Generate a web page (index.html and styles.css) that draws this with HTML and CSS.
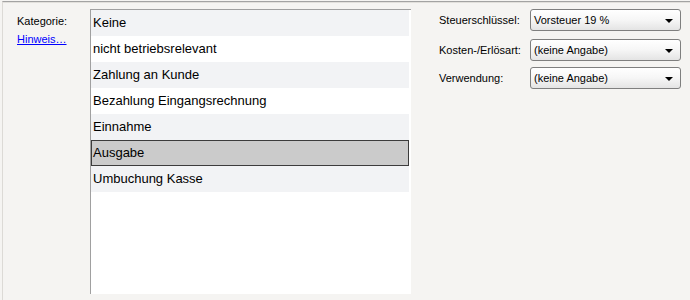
FILE: index.html
```html
<!DOCTYPE html>
<html>
<head>
<meta charset="utf-8">
<link rel="stylesheet" href="styles.css">
</head>
<body>
<div class="panel">
  <div class="side">
    <div class="label">Kategorie:</div>
    <a class="hint" href="#">Hinweis…</a>
  </div>
  <div class="list">
    <div class="item alt">Keine</div>
    <div class="item">nicht betriebsrelevant</div>
    <div class="item alt">Zahlung an Kunde</div>
    <div class="item">Bezahlung Eingangsrechnung</div>
    <div class="item alt">Einnahme</div>
    <div class="item selected">Ausgabe</div>
    <div class="item alt">Umbuchung Kasse</div>
  </div>
  <div class="fields">
    <div class="field f1">
      <span class="flabel">Steuerschlüssel:</span>
      <div class="combo"><span>Vorsteuer 19 %</span><i class="arrow"></i></div>
    </div>
    <div class="field f2">
      <span class="flabel">Kosten-/Erlösart:</span>
      <div class="combo"><span>(keine Angabe)</span><i class="arrow"></i></div>
    </div>
    <div class="field f3">
      <span class="flabel">Verwendung:</span>
      <div class="combo"><span>(keine Angabe)</span><i class="arrow"></i></div>
    </div>
  </div>
</div>
</body>
</html>
```

FILE: styles.css
```css
html, body {
  margin: 0;
  padding: 0;
  background: #f5f4f2;
  font-family: "Liberation Sans", Arial, sans-serif;
  color: #000;
  width: 690px;
  height: 300px;
  overflow: hidden;
}
.panel {
  margin: 1px 0 0 2px;
  border-top: 1px solid #a3a3a3;
  border-left: 1px solid #dcdad6;
  height: 298px;
  display: flex;
  align-items: flex-start;
  box-shadow: inset 0 1px 0 #e2e0dc;
}
.side {
  width: 73px;
  padding: 13px 0 0 14px;
  font-size: 11px;
  display: flex;
  flex-direction: column;
  gap: 6px;
}
.hint {
  color: #0000ff;
  text-decoration: underline;
}
.list {
  margin-top: 7px;
  width: 320px;
  height: 284px;
  background: #fff;
  border-top: 1px solid #a0a0a0;
  border-left: 1px solid #a0a0a0;
  font-size: 13px;
}
.item {
  height: 26px;
  line-height: 26px;
  padding-left: 2px;
  margin-right: 2px;
  box-sizing: border-box;
}
.item.alt {
  background: #f2f3f5;
}
.item.selected {
  background: #cbcbcb;
  border: 1px solid #3c3c3c;
  line-height: 24px;
  padding-left: 1px;
}
.fields {
  margin-left: 28px;
  display: flex;
  flex-direction: column;
}
.field {
  display: flex;
  align-items: center;
  font-size: 11px;
}
.f1 { margin-top: 7px; }
.f2 { margin-top: 8px; }
.f3 { margin-top: 6px; }
.flabel {
  width: 91px;
}
.combo {
  width: 151px;
  height: 22px;
  box-sizing: border-box;
  border: 1px solid #7f7f7f;
  border-radius: 3px;
  background: linear-gradient(#ffffff, #f6f6f6 50%, #e4e4e4);
  display: flex;
  align-items: center;
  justify-content: space-between;
  padding: 0 7px 0 3px;
}
.arrow {
  width: 0;
  height: 0;
  border-left: 4px solid transparent;
  border-right: 4px solid transparent;
  border-top: 4px solid #000;
  margin-top: 1px;
}
```
